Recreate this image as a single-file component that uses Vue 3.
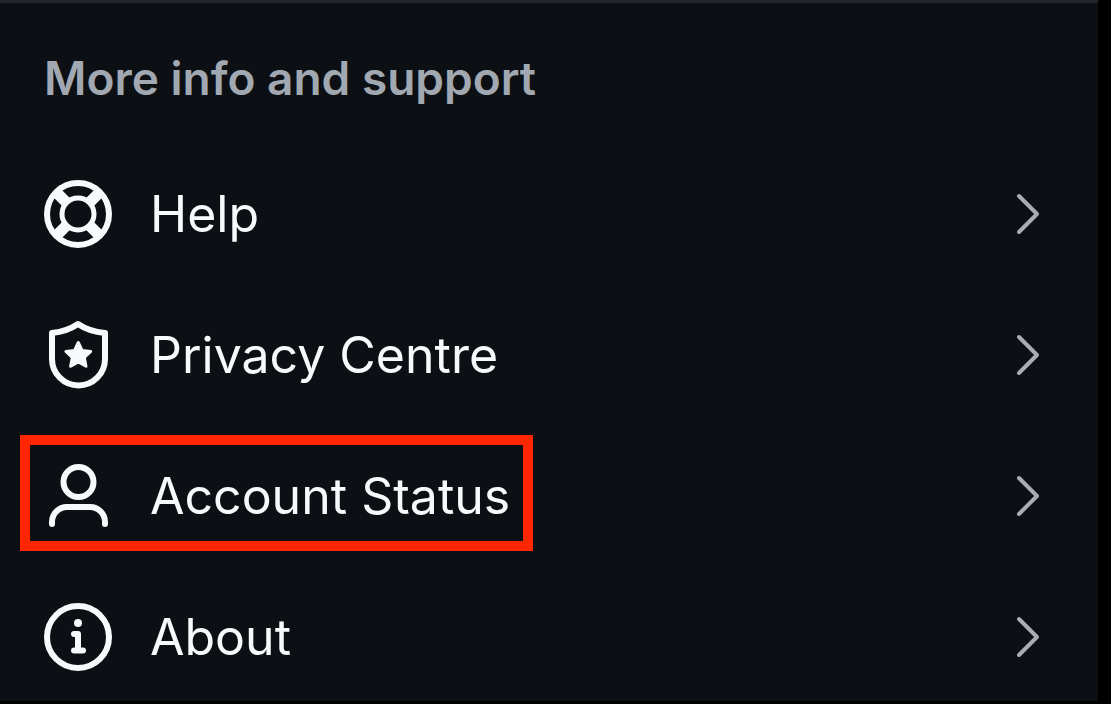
<script setup>
const items = [
  { id: 'help', label: 'Help' },
  { id: 'privacy', label: 'Privacy Centre' },
  { id: 'account', label: 'Account Status', highlighted: true },
  { id: 'about', label: 'About' },
]
</script>

<template>
  <main class="panel">
    <h2 class="heading">More info and support</h2>
    <nav class="list" aria-label="More info and support">
      <a v-for="item in items" :key="item.id" class="row" :href="'#' + item.id">
        <span class="entry" :class="{ highlighted: item.highlighted }">
          <svg class="icon" viewBox="0 0 72 72" aria-hidden="true">
            <template v-if="item.id === 'help'">
              <circle cx="36" cy="36" r="31" />
              <circle cx="36" cy="36" r="16" stroke-width="5" />
              <path
                class="spokes"
                d="M15 15 24.500 24.500M57 15 47.500 24.500M15 57 24.500 47.500M57 57 47.500 47.500"
              />
            </template>
            <template v-else-if="item.id === 'privacy'">
              <path d="M36 5Q25 12.500 10 14V40A26.500 26.500 0 0 0 63 40V14Q47 12.500 36 5Z" />
              <path
                class="star"
                d="M36.300 23.500 40 31.500 48.700 32.500 42.300 38.500 44 47.200 36.300 42.900 28.600 47.200 30.300 38.500 23.900 32.500 32.600 31.500Z"
              />
            </template>
            <template v-else-if="item.id === 'account'">
              <circle cx="36.500" cy="22" r="15" />
              <path d="M10 64V62A15 15 0 0 1 25 47H48A15 15 0 0 1 63 62V64" />
            </template>
            <template v-else>
              <circle cx="36" cy="36" r="31" />
              <circle class="dot" cx="36" cy="22" r="4" />
              <path d="M32 33H36V49.500M32 49.500H41" />
            </template>
          </svg>
          <span class="label">{{ item.label }}</span>
        </span>
        <svg class="chevron" viewBox="0 0 24 42" aria-hidden="true">
          <path d="M3 3 21 21 3 39" />
        </svg>
      </a>
    </nav>
  </main>
</template>

<style>
body {
  margin: 0;
  background: #000;
}
</style>

<style scoped>
.panel {
  box-sizing: border-box;
  min-height: calc(100vh - 3px);
  margin-right: 13px;
  padding: 45px 58px 28px 42px;
  border-top: 3px solid #22252a;
  background: #0c1014;
  font-family: Inter, "Liberation Sans", sans-serif;
}

.heading {
  margin: 0 0 70px;
  padding-left: 2px;
  color: #a2a8b1;
  font-size: 46px;
  font-weight: 600;
  line-height: 60px;
}

.list {
  display: flex;
  flex-direction: column;
  gap: 69px;
}

.row {
  display: flex;
  align-items: center;
  justify-content: space-between;
  color: #f8f9fb;
  text-decoration: none;
}

.entry {
  position: relative;
  display: flex;
  align-items: center;
  gap: 36px;
}

.highlighted::after {
  content: "";
  position: absolute;
  inset: -25px -23px -19px -22px;
  border: 10px solid #ff2600;
}

.label {
  font-size: 50px;
  line-height: 72px;
  white-space: nowrap;
}

.icon {
  flex: none;
  width: 72px;
  height: 72px;
  fill: none;
  stroke: #f8f9fb;
  stroke-width: 6;
  stroke-linecap: round;
  stroke-linejoin: round;
}

.spokes {
  stroke-width: 11;
  stroke-linecap: butt;
}

.star {
  fill: #f8f9fb;
  stroke-width: 3;
}

.dot {
  fill: #f8f9fb;
  stroke: none;
}

.chevron {
  flex: none;
  width: 24px;
  height: 42px;
  fill: none;
  stroke: #a8adb3;
  stroke-width: 4;
  stroke-linecap: round;
  stroke-linejoin: round;
}
</style>
